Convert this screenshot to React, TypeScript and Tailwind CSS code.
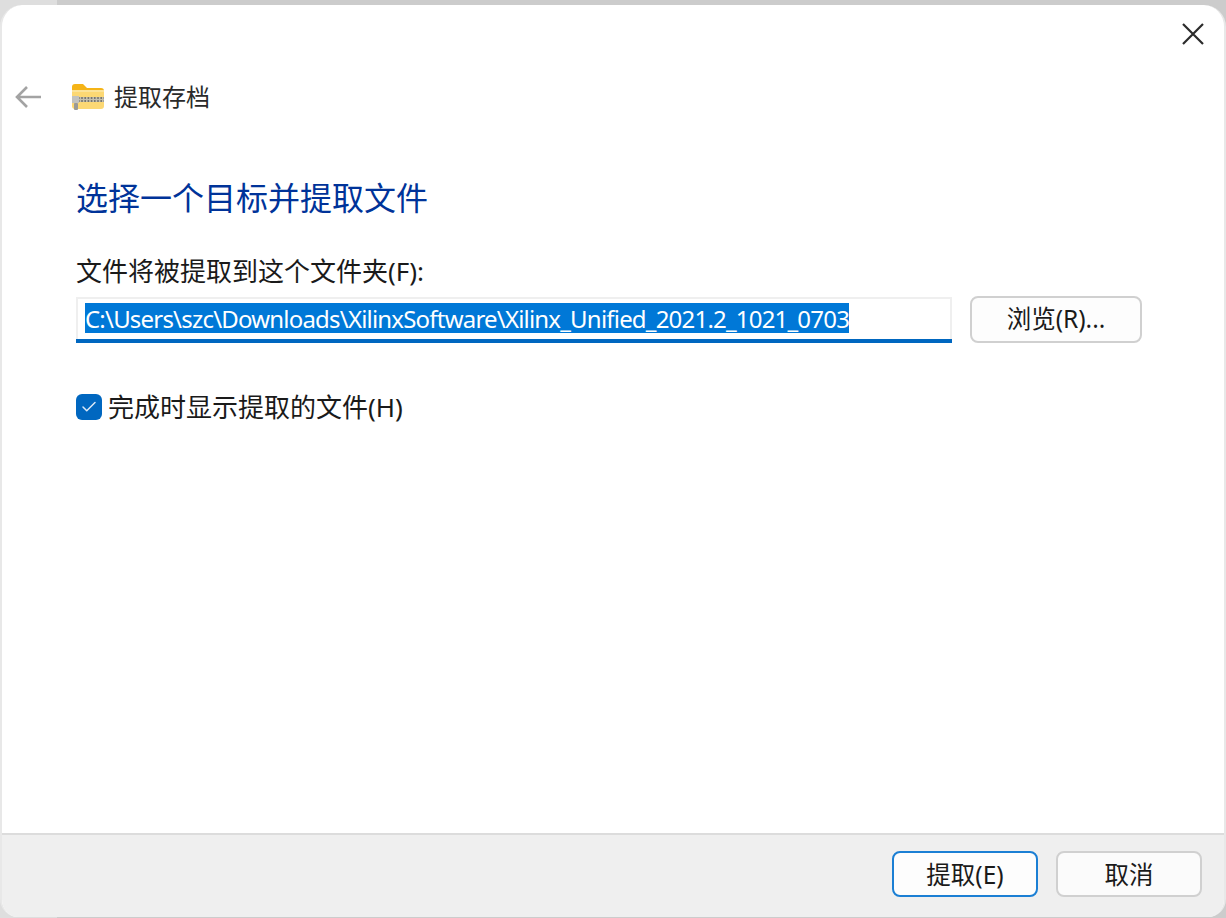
import { Check } from 'lucide-react';

const font = "font-['Noto_Sans','Noto_Sans_CJK_SC',sans-serif]";

function ZipFolder() {
  return (
    <svg width="34" height="30" viewBox="0 0 34 30">
      <path d="M1 5a3 3 0 0 1 3-3h8l4 4h14a3 3 0 0 1 3 3v4H1z" fill="#f5b417" />
      <path d="M1 9h32v15a3 3 0 0 1-3 3H4a3 3 0 0 1-3-3z" fill="#fcd874" />
      <rect x="1" y="8" width="32" height="2" fill="#fbe39a" />
      <rect x="6" y="15" width="27" height="5" fill="#c4bfae" />
      <path d="M7 16h26M7 19h26" stroke="#5f5f5a" strokeWidth="1.4" strokeDasharray="1.6 1.6" />
      <rect x="1" y="14" width="7" height="7" fill="#c2c2bf" />
      <rect x="3" y="21" width="4" height="7" rx="1" fill="#9a9a96" />
    </svg>
  );
}

function Button({ label, primary }: { label: string; primary?: boolean }) {
  return (
    <button
      className={
        primary
          ? 'w-[146px] h-[46px] pt-[2px] rounded-[8px] bg-[#fdfdfd] border-2 border-[#1b7fd4] text-[24.5px] text-[#1a1a1a]'
          : 'w-[146px] h-[46px] pt-[2px] rounded-[8px] bg-[#fbfbfb] border-2 border-[#d0d0d0] text-[24.5px] text-[#1a1a1a]'
      }
    >
      {label}
    </button>
  );
}

export default function App() {
  return (
    <div className={`${font} w-[1226px] h-[918px] bg-[linear-gradient(90deg,#dedede_57px,#cccccc_57px)] pt-[5px] overflow-hidden`}>
      <div className="w-full h-[912px] bg-white rounded-t-[22px] rounded-b-[18px] border-l-2 border-r-2 border-[#e8e8e8] flex flex-col overflow-hidden">
        <div className="flex justify-end pt-[18px] pr-[20px]">
          <svg width="22" height="22" viewBox="0 0 22 22" stroke="#2b2b2b" strokeWidth="2.2">
            <path d="M1 1l20 20M21 1L1 21" />
          </svg>
        </div>

        <div className="flex items-center mt-[32px] pl-[12px] h-[40px]">
          <svg width="28" height="24" viewBox="0 0 28 24" fill="none" stroke="#a3a3a3" strokeWidth="2.6">
            <path d="M27 12H3M13 2L3 12l10 10" />
          </svg>
          <span className="ml-[29px]">
            <ZipFolder />
          </span>
          <span className="ml-[9px] text-[24px] leading-none text-[#2a2a2a]">提取存档</span>
        </div>

        <div className="flex-1 pl-[74px] pr-[82px]">
          <h1 className="mt-[59px] text-[32px] leading-[44px] text-[#003399]">选择一个目标并提取文件</h1>

          <p className="mt-[35px] text-[26px] leading-[32px] text-[#1a1a1a]">文件将被提取到这个文件夹(F):</p>

          <div className="flex items-start gap-[18px] mt-[9px]">
            <div className="flex-1 h-[46px] mt-[1px] border-2 border-b-0 border-[#efefef] bg-white">
              <div className="h-[40px] pl-[7px] pt-[4px]">
                <span className="inline-flex h-[30px] pt-[2px] items-center bg-[#0078d7] text-white text-[24px] leading-none tracking-[-0.8px] whitespace-nowrap">
                  C:\Users\szc\Downloads\XilinxSoftware\Xilinx_Unified_2021.2_1021_0703
                </span>
              </div>
              <div className="h-[4px] -mx-[2px] bg-[#0067c0]" />
            </div>
            <button className="w-[172px] h-[47px] rounded-[8px] bg-[#fdfdfd] border-2 border-[#d0d0d0] text-[24.5px] text-[#1a1a1a]">
              浏览(R)...
            </button>
          </div>

          <div className="flex items-center gap-[6px] mt-[48px]">
            <span className="w-[26px] h-[26px] rounded-[6px] bg-[#0067c0] flex items-center justify-center">
              <Check size={18} color="#dce9f7" strokeWidth={2} />
            </span>
            <span className="text-[26px] leading-[32px] text-[#1a1a1a]">完成时显示提取的文件(H)</span>
          </div>
        </div>

        <div className="h-[84px] bg-[#efefef] border-t-2 border-[#dcdcdc] flex items-center justify-end gap-[18px] pr-[22px] pb-[4px]">
          <Button label="提取(E)" primary />
          <Button label="取消" />
        </div>
      </div>
    </div>
  );
}
